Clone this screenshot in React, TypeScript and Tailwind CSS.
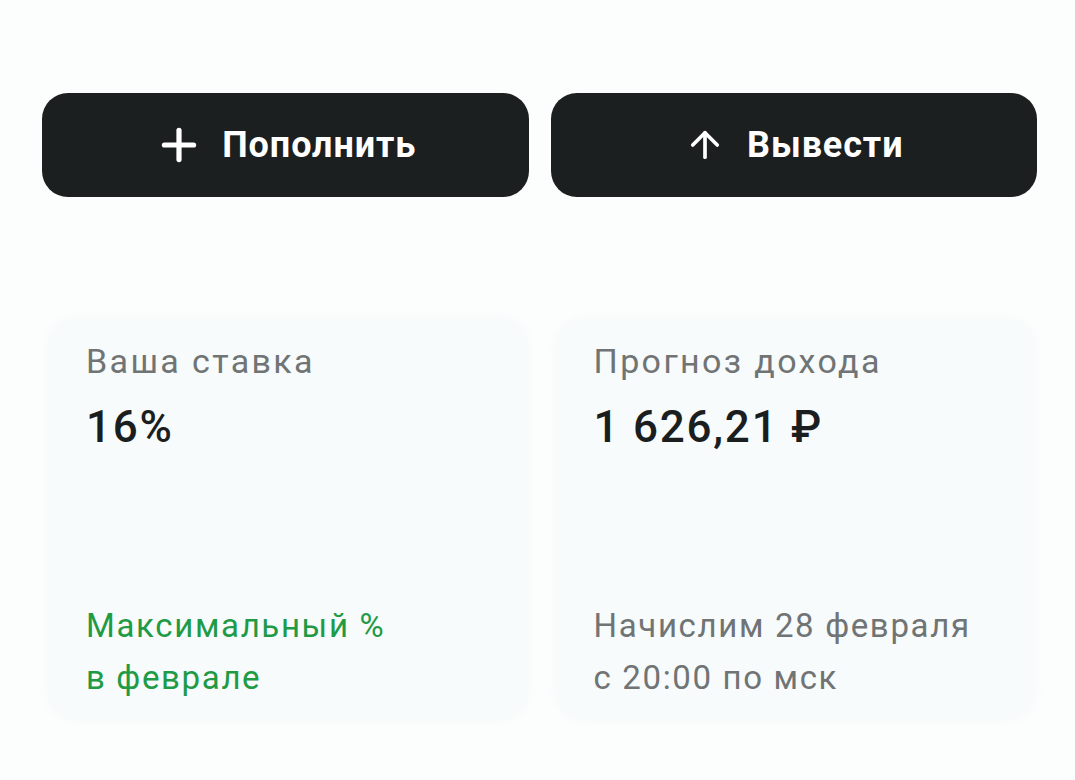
import { Plus, ArrowUp } from "lucide-react";

function ActionButton({
  icon,
  label,
  gap,
}: {
  icon: React.ReactNode;
  label: string;
  gap: string;
}) {
  return (
    <button
      className={`flex h-[104px] flex-1 items-center justify-center rounded-[26px] bg-[#1b1f1f] text-white ${gap}`}
    >
      {icon}
      <span className="text-[36px] font-bold tracking-[0.025em]">{label}</span>
    </button>
  );
}

function InfoCard({
  title,
  value,
  note,
  green,
}: {
  title: string;
  value: string;
  note: string[];
  green?: boolean;
}) {
  return (
    <div className="flex h-[402px] flex-1 flex-col justify-between rounded-[28px] bg-[#f7fbfc] px-[38px] pt-[21px] pb-[16px] shadow-[0_0_10px_rgba(210,225,230,0.12)]">
      <div>
        <div className="text-[34px] leading-[44px] tracking-[0.07em] text-[#707474]">
          {title}
        </div>
        <div className="mt-[20px] text-[44px] leading-[48px] font-medium tracking-[0.04em] text-[#1b1e1f]">
          {value}
        </div>
      </div>
      <div
        className={`text-[33px] leading-[52px] tracking-[0.05em] ${
          green ? "text-[#1f9a45]" : "text-[#707474]"
        }`}
      >
        {note.map((line) => (
          <div key={line}>{line}</div>
        ))}
      </div>
    </div>
  );
}

export default function App() {
  return (
    <div
      className="flex h-[780px] w-[1075px] flex-col bg-[#fcfdfd]"
      style={{ fontFamily: "Roboto, 'Noto Sans', sans-serif" }}
    >
      {/* --- ACTIONS --- */}
      <div className="flex h-[272px] gap-[22px] px-[42px] pt-[93px] pr-[38px]">
        <ActionButton
          icon={<Plus size={50} strokeWidth={2.5} />}
          label="Пополнить"
          gap="gap-[18px]"
        />
        <ActionButton
          icon={<ArrowUp size={42} strokeWidth={2.1} />}
          label="Вывести"
          gap="gap-[21px]"
        />
      </div>

      {/* --- SUMMARY --- */}
      <div className="flex gap-[28px] pt-[46px] pl-[48px] pr-[40px]">
        <InfoCard
          title="Ваша ставка"
          value="16%"
          note={["Максимальный %", "в феврале"]}
          green
        />
        <InfoCard
          title="Прогноз дохода"
          value="1 626,21 ₽"
          note={["Начислим 28 февраля", "с 20:00 по мск"]}
        />
      </div>
    </div>
  );
}
